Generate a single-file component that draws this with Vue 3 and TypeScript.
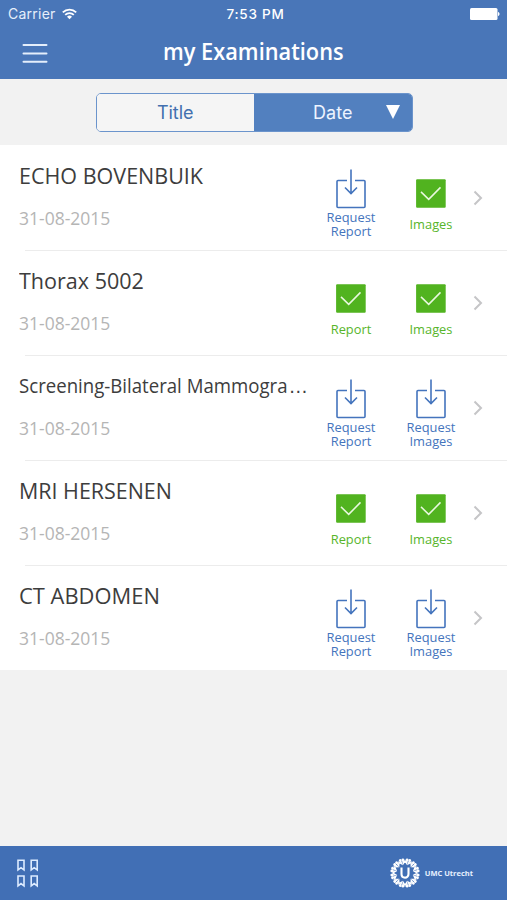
<script setup lang="ts">
import { ref } from 'vue'

interface Exam {
  title: string
  cut?: boolean
  width: number
  date: string
  report: boolean
  images: boolean
}

const sortBy = ref<'title' | 'date'>('date')

const exams: Exam[] = [
  { title: 'ECHO BOVENBUIK', width: 0.956, date: '31-08-2015', report: false, images: true },
  { title: 'Thorax 5002', width: 0.957, date: '31-08-2015', report: true, images: true },
  { title: 'Screening-Bilateral Mammogra', cut: true, width: 0.931, date: '31-08-2015', report: false, images: false },
  { title: 'MRI HERSENEN', width: 0.953, date: '31-08-2015', report: true, images: true },
  { title: 'CT ABDOMEN', width: 0.974, date: '31-08-2015', report: false, images: false },
]

const actions = (exam: Exam) => [
  { name: 'Report', ready: exam.report },
  { name: 'Images', ready: exam.images },
]

const petals = Array.from({ length: 12 }, (_, i) => i * 30)
</script>

<template>
  <div class="screen">
    <header class="top">
      <div class="status">
        <div class="carrier">
          <span>Carrier</span>
          <svg class="wifi" width="15" height="12" viewBox="0 0 15 12" fill="none" stroke="#fff" stroke-width="1.8">
            <path d="M.8 4.3a9.5 9.5 0 0 1 13.4 0M3.2 6.9a6.1 6.1 0 0 1 8.6 0" />
            <path d="M7.5 11.3 5 8.8a3.6 3.6 0 0 1 5 0z" fill="#fff" stroke="none" />
          </svg>
        </div>
        <span class="clock">7:53 PM</span>
        <svg class="battery" width="30" height="12" viewBox="0 0 30 12" fill="#fff">
          <rect x="0" y="0" width="27.5" height="12" rx="1.5" />
          <path d="M28 4c2 .4 2 3.600 0 4z" />
        </svg>
      </div>
      <div class="nav">
        <svg class="menu" width="26" height="21" viewBox="0 0 26 21" stroke="#e4eefb" stroke-width="2" stroke-linecap="round">
          <path d="M1.500 2h23M1.500 10.500h23M1.500 18.700h23" />
        </svg>
        <h1><span>my Examinations</span></h1>
      </div>
    </header>

    <div class="filter">
      <div class="segments">
        <button :class="{ active: sortBy === 'title' }" @click="sortBy = 'title'">Title</button>
        <button :class="{ active: sortBy === 'date' }" @click="sortBy = 'date'">
          Date
          <svg class="triangle" width="14" height="14" viewBox="0 0 14 14"><path d="M0 0h14L7 14z" fill="#fff" /></svg>
        </button>
      </div>
    </div>

    <main>
      <article v-for="exam in exams" :key="exam.title" class="row">
        <div class="info">
          <h2 :class="{ long: exam.cut }" :style="{ transform: `scaleX(${exam.width})` }">{{ exam.title }}<span v-if="exam.cut" class="dots">…</span></h2>
          <time>{{ exam.date }}</time>
        </div>
        <div v-for="action in actions(exam)" :key="action.name" class="action" :class="{ ready: action.ready }">
          <svg v-if="action.ready" width="30" height="40" viewBox="0 0 30 40" fill="none">
            <rect x=".1" y="10.200" width="29.600" height="28.500" rx="1" fill="#51b31f" />
            <path d="m5 22.900 7.700 7.500L24.500 18.400" stroke="#e9f8df" stroke-width="1.500" />
          </svg>
          <svg v-else width="30" height="40" viewBox="0 0 30 40" fill="none" stroke="#4474bd" stroke-width="1.600">
            <path d="M11 11.500H2a1 1 0 0 0-1 1V37.500a1 1 0 0 0 1 1H28a1 1 0 0 0 1-1V12.500a1 1 0 0 0-1-1H19M15 .4V24.500M9 18.500l6 6 6-6" />
          </svg>
          <span class="label">{{ action.ready ? action.name : `Request ${action.name}` }}</span>
        </div>
        <svg class="chevron" width="10" height="16" viewBox="0 0 10 16" fill="none" stroke="#c5c5c7" stroke-width="2">
          <path d="m1.500 1.500 6.500 6.500-6.500 6.500" />
        </svg>
      </article>
    </main>

    <footer>
      <svg width="24" height="30" viewBox="0 0 24 30" fill="none" stroke="#dcebff" stroke-width="1.600">
        <path d="M2 2.200h6v9.800l-3-2.300-3 2.300zM15.200 2.200h6v9.800l-3-2.300-3 2.300zM2 18h6v9.800l-3-2.300-3 2.300zM15.200 18h6v9.800l-3-2.300-3 2.300z" />
      </svg>
      <div class="brand">
        <svg width="32" height="32" viewBox="-16 -16 32 32" fill="none" stroke="#fff">
          <g v-for="angle in petals" :key="angle" :transform="`rotate(${angle})`">
            <path d="M-2.300-13.200-1.700-9.600 0-12.200 1.700-9.600 2.300-13.200" stroke-width="1.400" />
            <circle cx="-2.100" cy="-13.200" r="1.400" fill="#fff" stroke="none" />
            <circle cx="2.100" cy="-13.200" r="1.400" fill="#fff" stroke="none" />
          </g>
          <path d="M-3.500-5.400V1c0 4.800 7 4.800 7 0V-5.400" stroke-width="2.100" />
        </svg>
        <span>UMC Utrecht</span>
      </div>
    </footer>
  </div>
</template>

<style>
body {
  margin: 0;
}
</style>

<style scoped>
.screen {
  width: 507px;
  height: 900px;
  display: flex;
  flex-direction: column;
  background: #f2f2f2;
  font-family: 'Open Sans', 'Noto Sans', sans-serif;
  overflow: hidden;
}
.top {
  height: 79px;
  background: #4976b8;
  color: #fff;
}
.status {
  height: 27px;
  display: grid;
  grid-template-columns: 1fr auto 1fr;
  align-items: center;
  padding: 0 7px 0 8px;
  box-sizing: border-box;
  font: 14px/26px Inter, sans-serif;
}
.carrier {
  display: flex;
  align-items: center;
  gap: 6px;
  color: #e6effb;
  letter-spacing: 0.25px;
}
.clock {
  padding-left: 3px;
  font-weight: 500;
  font-size: 13.5px;
  letter-spacing: 0.75px;
}
.battery {
  justify-self: end;
}
.nav {
  height: 52px;
  display: grid;
  grid-template-columns: 48px 1fr 48px;
  align-items: center;
}
.menu {
  margin-left: 22px;
}
h1 {
  margin: 0 0 3px;
  text-align: center;
  font-size: 22.5px;
  line-height: 30px;
  font-weight: 600;
}
h1 span {
  display: inline-block;
  transform: scaleX(0.968);
}
.filter {
  height: 66px;
  display: flex;
  justify-content: center;
  align-items: center;
}
.segments {
  width: 317px;
  height: 39px;
  box-sizing: border-box;
  display: grid;
  grid-template-columns: 1fr 1fr;
  margin-left: 1px;
  border: 1px solid #6b94cc;
  border-radius: 5px;
  overflow: hidden;
}
button {
  display: flex;
  align-items: center;
  justify-content: center;
  position: relative;
  border: 0;
  padding: 0;
  background: #f5f5f5;
  color: #4270af;
  font: 18px Inter, sans-serif;
}
button.active {
  background: #5280bf;
  color: #edf4ff;
}
.triangle {
  position: absolute;
  right: 12px;
  top: 11px;
}
.row {
  height: 105px;
  display: flex;
  background: #fff;
}
.row + .row {
  background: linear-gradient(#ececec, #ececec) 25px 0 / 100% 1px no-repeat #fff;
}
.info {
  width: 311.5px;
  padding: 14px 0 0 19px;
  box-sizing: border-box;
}
h2 {
  margin: 0;
  height: 34px;
  color: #3d3d3d;
  font-size: 22.5px;
  line-height: 34px;
  font-weight: 400;
  white-space: nowrap;
  transform-origin: 0 50%;
}
h2.long {
  font-size: 20px;
}
.dots {
  margin-left: 1px;
  font-family: 'Liberation Sans', sans-serif;
  font-size: 21px;
  line-height: 1;
}
time {
  display: block;
  margin-top: 12.5px;
  color: #b5b5b5;
  font-size: 18px;
  line-height: 24px;
  transform-origin: 0 50%;
  transform: scaleX(0.973);
}
.action {
  width: 79.5px;
  padding-top: 24px;
  box-sizing: border-box;
  display: flex;
  flex-direction: column;
  align-items: center;
  color: #4474bd;
}
.action.ready {
  color: #57b52a;
}
.action svg {
  flex: none;
  margin-bottom: 1px;
}
.action.ready svg {
  margin-bottom: 8px;
}
.label {
  width: 54px;
  text-align: center;
  font-size: 13.2px;
  line-height: 14px;
  transform: scaleX(0.975);
}
.chevron {
  margin: 45px 0 0 2.5px;
}
footer {
  height: 54px;
  margin-top: auto;
  box-sizing: border-box;
  display: flex;
  align-items: center;
  justify-content: space-between;
  padding: 0 34px 0 16px;
  background: #416fb5;
}
.brand {
  display: flex;
  align-items: center;
  gap: 4px;
  color: #e7f1ff;
  font-size: 7.5px;
  font-weight: 700;
}
</style>
